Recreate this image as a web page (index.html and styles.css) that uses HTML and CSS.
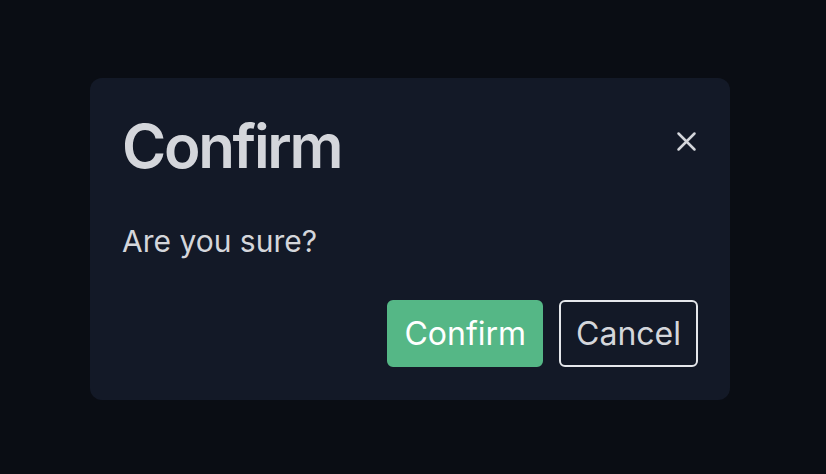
FILE: index.html
```html
<!DOCTYPE html>
<html>
<head>
<meta charset="utf-8">
<link rel="stylesheet" href="styles.css">
</head>
<body>
<div class="overlay">
  <div class="dialog">
    <div class="header">
      <h1 class="title">Confirm</h1>
      <button class="close" aria-label="Close">
        <svg width="24" height="24" viewBox="0 0 24 24"><path d="M4.5 4.5L20.5 20.5M20.5 4.5L4.5 20.5" stroke="#d4d6db" stroke-width="2.5" stroke-linecap="round"/></svg>
      </button>
    </div>
    <p class="message">Are you sure?</p>
    <div class="actions">
      <button class="btn btn-confirm">Confirm</button>
      <button class="btn btn-cancel">Cancel</button>
    </div>
  </div>
</div>
</body>
</html>
```
FILE: styles.css
```css
html, body {
  margin: 0;
  padding: 0;
  height: 100%;
}
body {
  background: #0a0d14;
  font-family: Inter, "Noto Sans", sans-serif;
}
.overlay {
  box-sizing: border-box;
  height: 100%;
  padding: 4px 6px 0 0;
  display: flex;
  justify-content: center;
  align-items: center;
}
.dialog {
  width: 640px;
  box-sizing: border-box;
  background: #131927;
  border-radius: 12px;
  padding: 32px 32px 33px;
}
.header {
  display: flex;
  justify-content: space-between;
  align-items: flex-start;
}
.title {
  margin: 0;
  font-size: 60px;
  font-weight: 600;
  line-height: 72px;
  letter-spacing: -2.3px;
  color: #d4d6db;
}
.close {
  background: none;
  border: none;
  padding: 0;
  margin-top: 19px;
  width: 24px;
  height: 24px;
  display: flex;
  align-items: center;
  justify-content: center;
  cursor: pointer;
}
.message {
  margin: 37px 0 0;
  font-size: 30px;
  line-height: 45px;
  color: #d4d6db;
}
.actions {
  margin-top: 36px;
  display: flex;
  justify-content: flex-end;
  gap: 16px;
}
.btn {
  font-family: Inter, "Noto Sans", sans-serif;
  font-size: 32px;
  line-height: 39px;
  padding: 12px 15px;
  border-radius: 6px;
  cursor: pointer;
}
.btn-confirm {
  background: #55b786;
  border: 2px solid #55b786;
  color: #ffffff;
}
.btn-cancel {
  background: transparent;
  border: 2px solid #e5e7eb;
  color: #d4d6db;
}
```
